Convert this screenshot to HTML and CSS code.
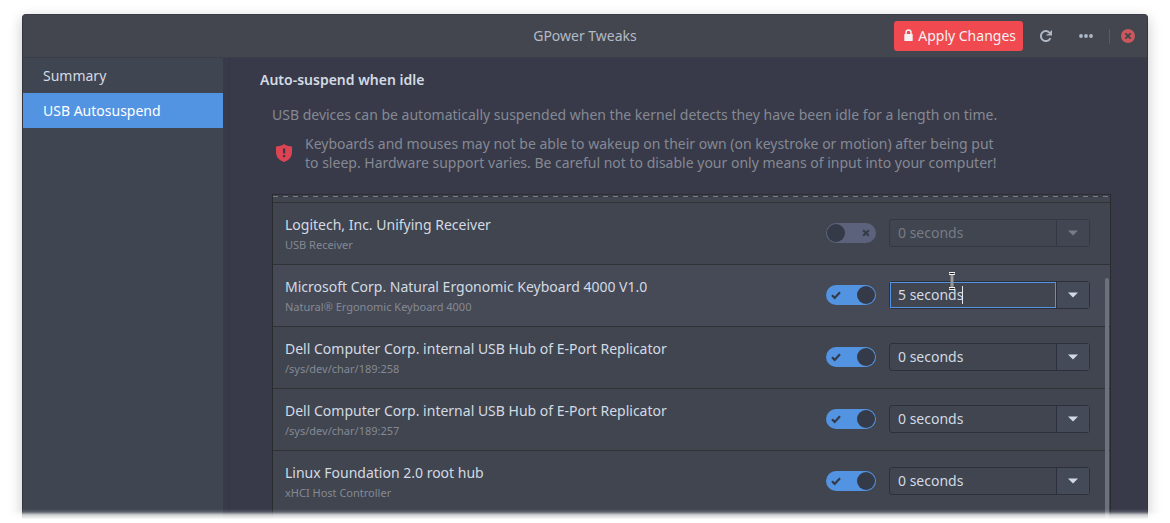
FILE: index.html
```html
<!DOCTYPE html>
<html lang="en">
<head>
<meta charset="utf-8">
<title>GPower Tweaks</title>
<link rel="stylesheet" href="styles.css">
</head>
<body>
<svg width="0" height="0" class="sprite" aria-hidden="true">
  <symbol id="check" viewBox="0 0 10 10"><path d="M1 5.2 3.7 7.9 9 2.3" fill="none" stroke="currentColor" stroke-width="2.2"/></symbol>
  <symbol id="cross" viewBox="0 0 10 10"><path d="M2.2 2.2 7.8 7.8M7.8 2.2 2.2 7.8" fill="none" stroke="currentColor" stroke-width="2"/></symbol>
  <symbol id="arrow" viewBox="0 0 10 6"><path d="M0 0.5h10L5 5.5z" fill="currentColor"/></symbol>
</svg>
<div class="window">
  <header class="titlebar">
    <h1 class="title">GPower Tweaks</h1>
    <div class="actions">
      <button class="apply" type="button">
        <svg width="9" height="12" viewBox="0 0 9 12" aria-hidden="true"><path d="M2 6V3.4a2.5 2.5 0 0 1 5 0V6" fill="none" stroke="currentColor" stroke-width="1.5"/><rect x="0.3" y="5" width="8.4" height="7" rx="0.6" fill="currentColor"/></svg>
        Apply Changes
      </button>
      <button class="icon-button" type="button" aria-label="Refresh">
        <svg width="14" height="14" viewBox="0 0 14 14" aria-hidden="true"><path d="M11.4 9.2A5 5 0 1 1 10.8 4" fill="none" stroke="currentColor" stroke-width="2"/><path d="M13 1v5.5H7.5V5.4l2-.4L12 1.8z" fill="currentColor"/></svg>
      </button>
      <button class="icon-button menu" type="button" aria-label="Menu">
        <svg width="14" height="4" viewBox="0 0 14 4" aria-hidden="true"><g fill="currentColor"><circle cx="2" cy="2" r="1.9"/><circle cx="7" cy="2" r="1.9"/><circle cx="12" cy="2" r="1.9"/></g></svg>
      </button>
      <span class="divider"></span>
      <button class="close" type="button" aria-label="Close">
        <svg width="14" height="14" viewBox="0 0 14 14" aria-hidden="true"><circle cx="7" cy="7" r="7" fill="#cc575d"/><path d="M4.4 4.4 9.6 9.6M9.6 4.4 4.4 9.6" stroke="#43464f" stroke-width="2"/></svg>
      </button>
    </div>
  </header>
  <div class="columns">
    <nav class="sidebar">
      <a class="nav-item" href="#summary">Summary</a>
      <a class="nav-item active" href="#usb" aria-current="page">USB Autosuspend</a>
    </nav>
    <main class="content">
      <h2 class="heading">Auto-suspend when idle</h2>
      <p class="intro">USB devices can be automatically suspended when the kernel detects they have been idle for a length on time.</p>
      <div class="warning">
        <svg width="16" height="18" viewBox="0 0 16 18" aria-hidden="true"><path d="M8 0C6.2 1.5 3 2.4 0 2.4V8c0 5 3.2 8.400 8 10 4.800-1.600 8-5 8-10V2.400C13 2.400 9.800 1.500 8 0z" fill="#dc4453"/><path d="M7 4.500h2.200v5H7zM7 11h2.200v2.200H7z" fill="#383a49"/></svg>
        <p>Keyboards and mouses may not be able to wakeup on their own (on keystroke or motion) after being put<br>to sleep. Hardware support varies. Be careful not to disable your only means of input into your computer!</p>
      </div>
      <div class="list-frame">
        <div class="undershoot"></div>
        <ul class="devices">
          <li class="device">
            <div class="names"><span class="name">Logitech, Inc. Unifying Receiver</span><span class="detail">USB Receiver</span></div>
            <label class="switch disabled"><input type="checkbox" aria-label="Autosuspend Unifying Receiver" disabled><svg width="10" height="10" aria-hidden="true"><use href="#cross"/></svg></label>
            <div class="combo disabled"><input type="text" value="0 seconds" aria-label="Delay for Unifying Receiver" disabled><button type="button" aria-label="Choose delay" disabled><svg width="10" height="6" aria-hidden="true"><use href="#arrow"/></svg></button></div>
          </li>
          <li class="device current">
            <div class="names"><span class="name">Microsoft Corp. Natural Ergonomic Keyboard 4000 V1.0</span><span class="detail">Natural® Ergonomic Keyboard 4000</span></div>
            <label class="switch"><input type="checkbox" aria-label="Autosuspend Ergonomic Keyboard" checked><svg width="10" height="10" aria-hidden="true"><use href="#check"/></svg></label>
            <div class="combo focused"><input type="text" value="5 seconds" aria-label="Delay for Ergonomic Keyboard"><button type="button" aria-label="Choose delay"><svg width="10" height="6" aria-hidden="true"><use href="#arrow"/></svg></button><span class="caret"></span>
              <svg class="pointer" width="8" height="18" viewBox="0 0 8 18" aria-hidden="true"><path d="M2.500 2h3v14h-3z" fill="#999"/><path d="M1 1.500h6M1 16.500h6" stroke="#f2f2f2" stroke-width="3"/><path d="M1.500 1.500h5M1.500 16.500h5" stroke="#222" stroke-width="1"/></svg>
            </div>
          </li>
          <li class="device">
            <div class="names"><span class="name">Dell Computer Corp. internal USB Hub of E-Port Replicator</span><span class="detail">/sys/dev/char/189:258</span></div>
            <label class="switch"><input type="checkbox" aria-label="Autosuspend hub 258" checked><svg width="10" height="10" aria-hidden="true"><use href="#check"/></svg></label>
            <div class="combo"><input type="text" value="0 seconds" aria-label="Delay for hub 258"><button type="button" aria-label="Choose delay"><svg width="10" height="6" aria-hidden="true"><use href="#arrow"/></svg></button></div>
          </li>
          <li class="device">
            <div class="names"><span class="name">Dell Computer Corp. internal USB Hub of E-Port Replicator</span><span class="detail">/sys/dev/char/189:257</span></div>
            <label class="switch"><input type="checkbox" aria-label="Autosuspend hub 257" checked><svg width="10" height="10" aria-hidden="true"><use href="#check"/></svg></label>
            <div class="combo"><input type="text" value="0 seconds" aria-label="Delay for hub 257"><button type="button" aria-label="Choose delay"><svg width="10" height="6" aria-hidden="true"><use href="#arrow"/></svg></button></div>
          </li>
          <li class="device">
            <div class="names"><span class="name">Linux Foundation 2.0 root hub</span><span class="detail">xHCI Host Controller</span></div>
            <label class="switch"><input type="checkbox" aria-label="Autosuspend root hub" checked><svg width="10" height="10" aria-hidden="true"><use href="#check"/></svg></label>
            <div class="combo"><input type="text" value="0 seconds" aria-label="Delay for root hub"><button type="button" aria-label="Choose delay"><svg width="10" height="6" aria-hidden="true"><use href="#arrow"/></svg></button></div>
          </li>
        </ul>
        <span class="scrollbar"></span>
      </div>
    </main>
  </div>
  <div class="fade"></div>
</div>
</body>
</html>
```
FILE: styles.css
```css
* { box-sizing: border-box; }
body {
  margin: 0;
  height: 100vh;
  padding: 14px 22px 0;
  background: #fff;
  overflow: hidden;
  font: 14px/19px "Noto Sans", sans-serif;
  color: #d3dae3;
}
h1, h2, p, ul { margin: 0; padding: 0; font: inherit; }
button, input { font: inherit; color: inherit; margin: 0; padding: 0; border: 0; background: none; }
svg { display: block; flex: none; }
.sprite { position: absolute; }
.window {
  position: relative;
  height: 100%;
  display: flex;
  flex-direction: column;
  border: 1px solid #33353d;
  border-top-color: #3b3e46;
  border-radius: 4px 4px 0 0;
  background: #383a49;
  box-shadow: 0 4px 14px rgba(0, 0, 0, 0.22);
}
.titlebar {
  display: grid;
  grid-template-columns: 1fr auto 1fr;
  align-items: center;
  height: 43px;
  flex: none;
  padding-right: 12px;
  border-bottom: 1px solid #3c3e47;
  border-radius: 3px 3px 0 0;
  background: #43464f;
}
.title { grid-column: 2; padding: 0 0 2px 12px; color: #b3bac4; }
.actions { display: flex; align-items: center; justify-content: flex-end; }
.apply {
  display: flex;
  align-items: center;
  gap: 5px;
  height: 30px;
  padding: 0 7px 2px 10px;
  border-radius: 3px;
  background: #f04a50;
  color: #f5f0f2;
}
.icon-button { display: flex; margin-left: 16px; color: #afb8c6; }
.menu { margin-left: 26px; }
.divider { width: 1px; height: 15px; margin: 0 11px 0 16px; background: #565a66; }
.close { display: flex; }
.columns { display: flex; flex: 1; min-height: 0; }
.sidebar {
  width: 200px;
  flex: none;
  background: #404552;
}
.nav-item {
  display: block;
  padding: 8px 20px;
  color: #d3dae3;
  text-decoration: none;
}
.nav-item.active { background: #5294e2; color: #fff; }
.content {
  display: flex;
  flex-direction: column;
  flex: 1;
  min-width: 0;
  margin-left: 6px;
  padding: 12px 36px 0 30px;
  border-left: 1px solid #343643;
}
.heading { font-weight: 600; }
.intro { margin: 16px 0 0 12px; color: #858993; }
.warning {
  display: flex;
  align-items: center;
  gap: 13px;
  margin: 10px 0 22px 16px;
  color: #858993;
}
.list-frame {
  position: relative;
  flex: 1;
  min-height: 0;
  margin-left: 12px;
  overflow: hidden;
  border: 1px solid #292b2f;
  border-bottom: 0;
  background: #404550;
}
.undershoot {
  height: 7px;
  padding-top: 1px;
}
.undershoot::before {
  content: "";
  display: block;
  height: 1px;
  background: repeating-linear-gradient(90deg, #757b86 0 5px, #343741 5px 10px);
}
.devices { list-style: none; }
.device {
  display: flex;
  align-items: center;
  height: 62px;
  padding: 0 20px 2px 12px;
  border-top: 1px solid #303234;
}
.device.current { background: #454a56; }
.names { flex: 1; min-width: 0; display: flex; flex-direction: column; padding-top: 4px; }
.name { line-height: 20px; white-space: nowrap; }
.detail { font-size: 11px; line-height: 20px; color: #858993; }
.switch {
  position: relative;
  display: flex;
  align-items: center;
  width: 50px;
  height: 20px;
  padding: 0 5px;
  margin-right: 13px;
  border-radius: 10px;
  background: #5294e2;
  color: #353a48;
}
.switch input {
  position: absolute;
  top: 1px;
  right: 1px;
  appearance: none;
  width: 18px;
  height: 18px;
  border-radius: 50%;
  background: #353a48;
}
.switch.disabled { justify-content: flex-end; background: #5c627b; }
.switch.disabled input { right: auto; left: 1px; }
.combo {
  position: relative;
  display: flex;
  width: 201px;
  height: 28px;
  border: 1px solid #2d303b;
  border-radius: 3px;
  background: #404550;
}
.combo input { flex: 1; min-width: 0; padding: 0 8px; outline: 0; }
.combo button {
  display: flex;
  align-items: center;
  justify-content: center;
  width: 33px;
  border-left: 1px solid #2d303b;
  background: #444a58;
}
.combo.disabled { border-color: #353843; color: #777c87; }
.combo.disabled button { border-color: #353843; background: #414652; }
.combo.focused input { box-shadow: inset 0 0 0 1px #5294e2; }
.caret {
  position: absolute;
  left: 72px;
  top: 4px;
  width: 1px;
  height: 18px;
  background: #e4e8ee;
}
.pointer { position: absolute; left: 58px; top: -10px; }
.scrollbar {
  position: absolute;
  top: 83px;
  right: 1px;
  bottom: 0;
  width: 4px;
  border-radius: 2px 2px 0 0;
  background: #6b717d;
}
.fade {
  position: absolute;
  left: -22px;
  right: -22px;
  bottom: -1px;
  height: 14px;
  background: linear-gradient(rgba(255, 255, 255, 0), rgba(255, 255, 255, 0.15) 20%, rgba(255, 255, 255, 0.75) 42%, #fff 75%);
}
```
